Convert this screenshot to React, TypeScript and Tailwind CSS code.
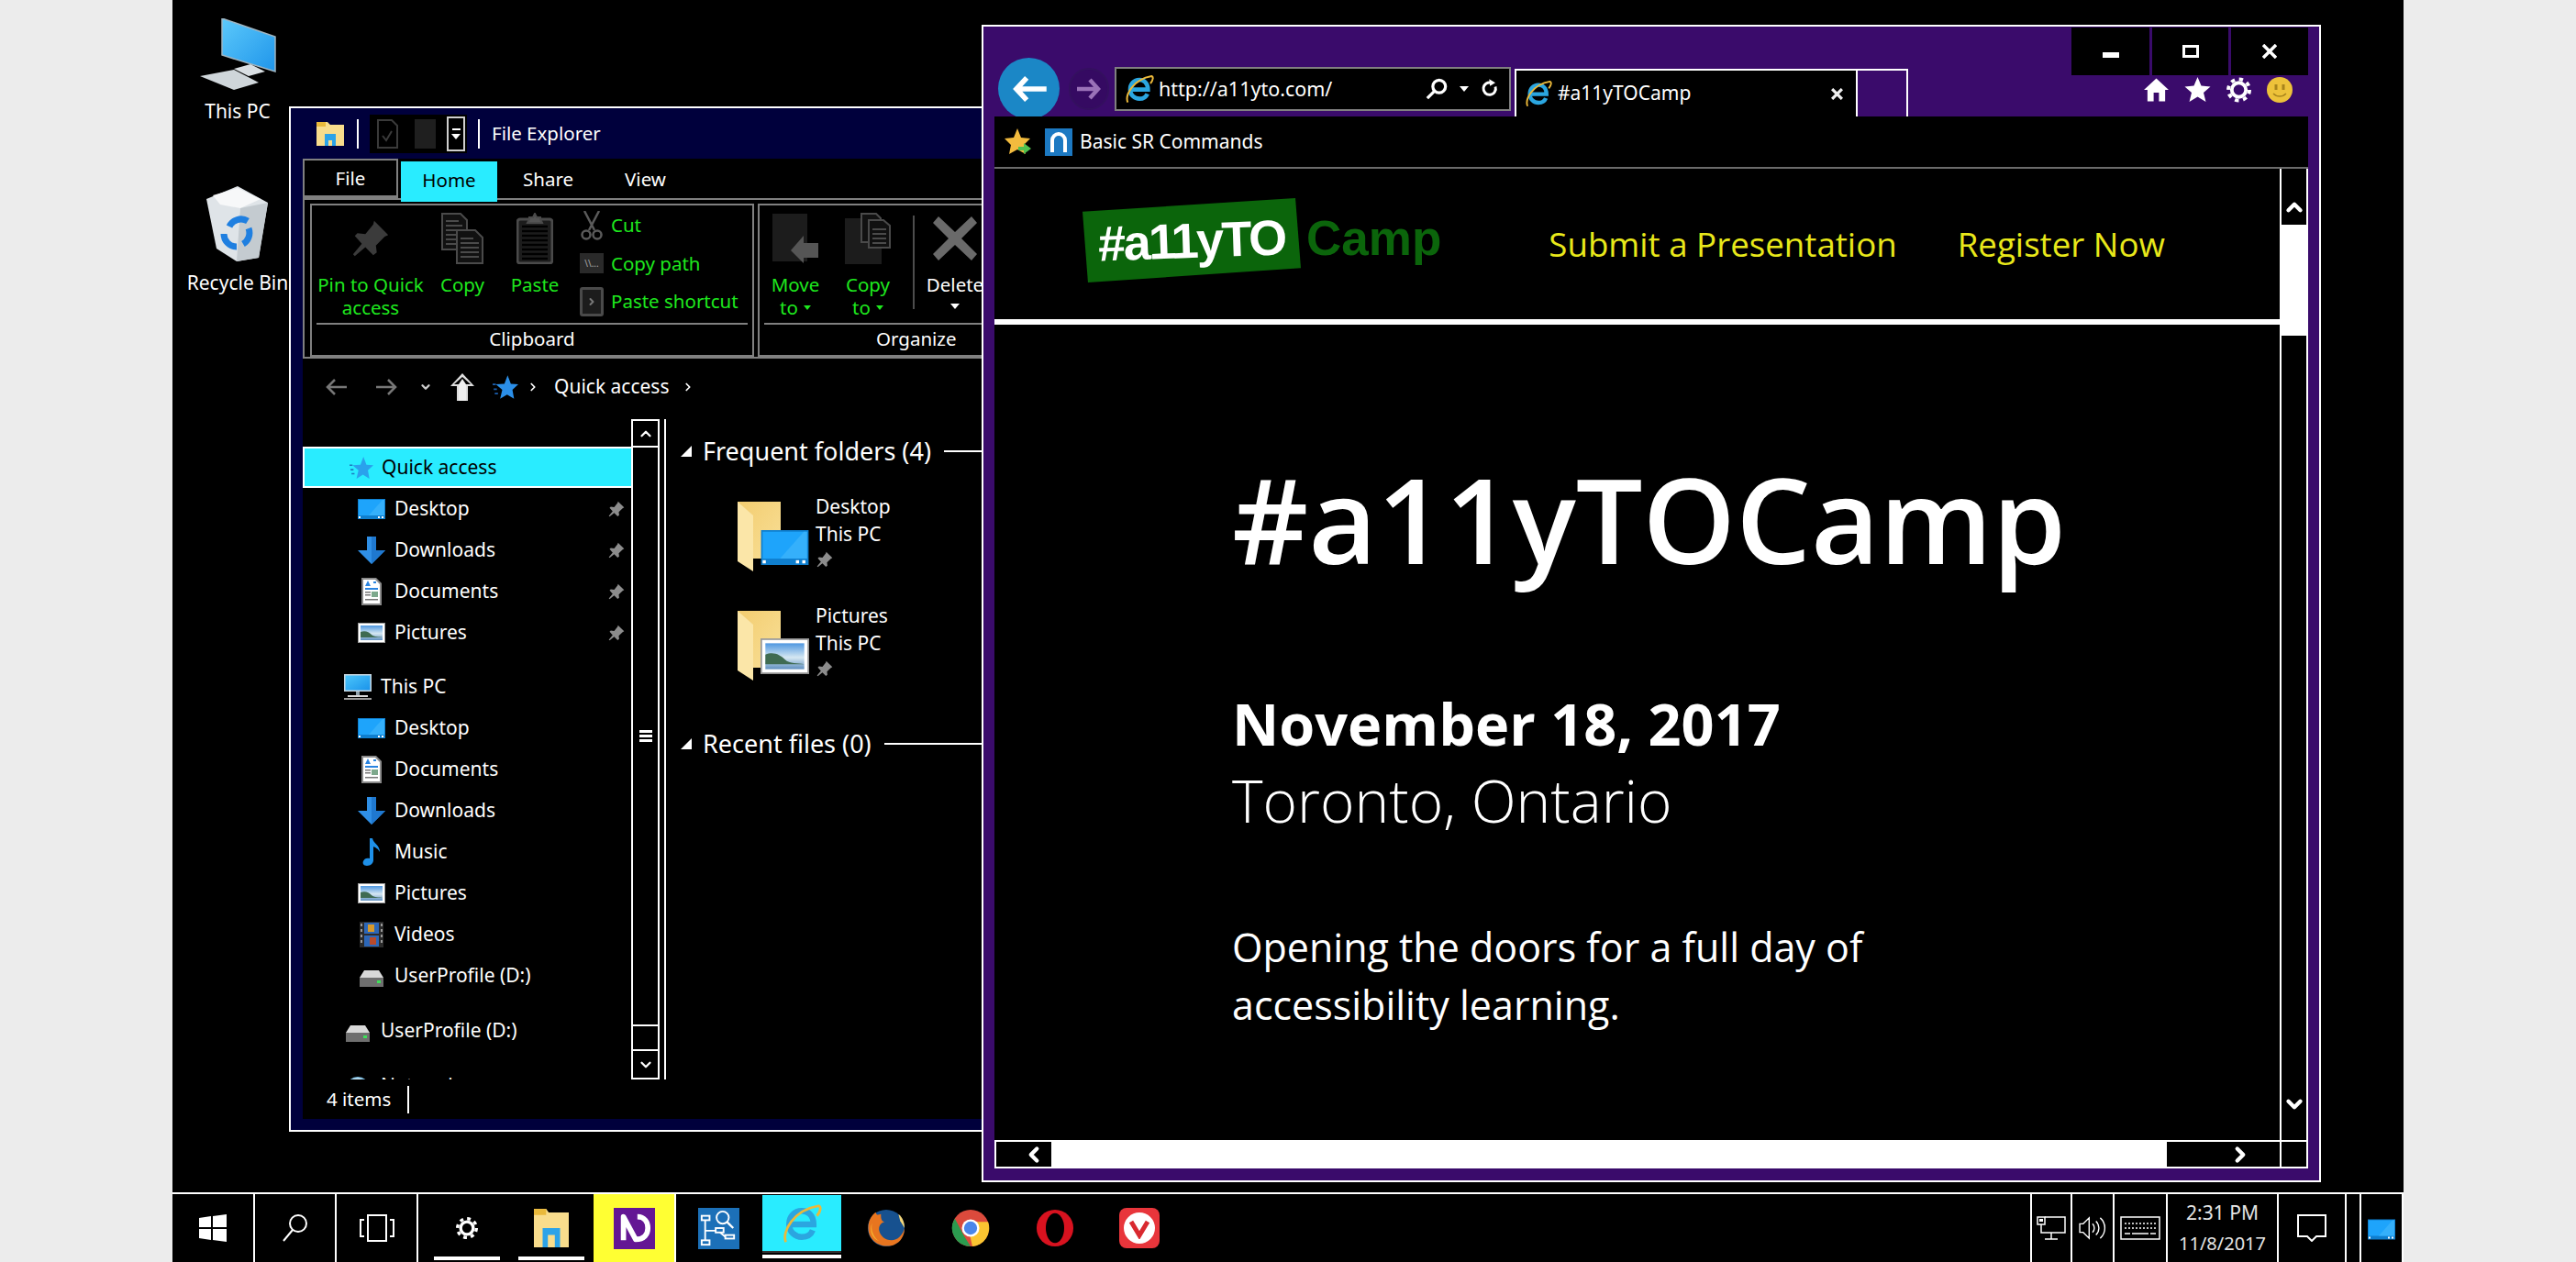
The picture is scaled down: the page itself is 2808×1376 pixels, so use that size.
import { ChevronDown, ChevronLeft, ChevronRight, ChevronUp } from "lucide-react";
import React from "react";

const cyan = "bg-[#29ecff]";

const Pin = ({ className = "", fill = "#8c8c8c" }: { className?: string; fill?: string }) => (
  <svg viewBox="0 0 24 24" className={className} fill={fill}>
    <path d="M14 2l8 8-2 1-5 5 .5 4-2 1.5L9 17l-6 5-1-1 5-6-4-4.500L4.500 9 9 9.500 13.500 4z" />
  </svg>
);

const DesktopIcon = ({ className = "w-[30px] h-[22px]" }: { className?: string }) => (
  <svg viewBox="0 0 30 22" className={className}>
    <rect width="30" height="22" fill="#0f7fcf" />
    <rect x="1" y="1" width="28" height="17" fill="#1ea4fb" />
    <polygon points="12,18 27,1 29,1 29,18" fill="#35b0fb" />
    <rect x="1" y="19" width="2" height="2" fill="#fff" />
    <rect x="22" y="19" width="2" height="2" fill="#fff" />
    <rect x="26" y="19" width="2" height="2" fill="#fff" />
  </svg>
);

const DownloadIcon = () => (
  <svg viewBox="0 0 30 30" className="w-[30px] h-[30px]">
    <path d="M10 0h10v15h10L15 30 0 15h10z" fill="#2f8fe6" />
    <path d="M15 0h5v15h10L15 30z" fill="#1f78cf" />
  </svg>
);

const DocumentIcon = () => (
  <svg viewBox="0 0 24 30" className="w-[24px] h-[30px]">
    <path d="M1 0h16l6 6v24H1z" fill="#8a8a8a" />
    <path d="M3 2h13l5 5v21H3z" fill="#fff" />
    <path d="M8 3l3 6H5zM14 4h3v2h-3zM5 11h14v2H5z" fill="#2a84e0" />
    <rect x="5" y="15" width="6" height="1.500" fill="#777" />
    <rect x="5" y="18" width="6" height="1.500" fill="#777" />
    <rect x="12" y="15" width="7" height="6" fill="#7da88c" />
    <rect x="5" y="23" width="14" height="1.500" fill="#777" />
  </svg>
);

const PictureIcon = ({ className = "w-[30px] h-[22px]" }: { className?: string }) => (
  <svg viewBox="0 0 30 22" className={className}>
    <defs>
      <linearGradient id="pic-sky" x1="0" y1="0" x2="0" y2="1">
        <stop offset="0" stopColor="#4f97e0" />
        <stop offset="0.55" stopColor="#d6e8f2" />
        <stop offset="1" stopColor="#5f8fc0" />
      </linearGradient>
    </defs>
    <rect width="30" height="22" fill="#9a9a9a" />
    <rect x="1" y="1" width="28" height="20" fill="#fff" />
    <rect x="3" y="3" width="24" height="16" fill="url(#pic-sky)" />
    <path d="M3 10c5-2 9 0 12 3s8 2 12 3v0H3z" fill="#3f6b52" />
  </svg>
);

const MusicIcon = () => (
  <svg viewBox="0 0 24 30" className="w-[24px] h-[30px]">
    <path d="M10 0h3c1 6 8 7 8 15-2-4-5-5-7-6v15c0 3-3 6-7 6-4 0-5-3-4-5 1-3 4-4 7-3z" fill="#1e90e8" />
  </svg>
);

const VideoIcon = () => (
  <svg viewBox="0 0 26 28" className="w-[26px] h-[28px]">
    <rect width="26" height="28" fill="#2b2b2b" />
    <rect x="5" y="1" width="16" height="12" fill="#2c67b8" />
    <rect x="5" y="15" width="16" height="12" fill="#2c67b8" />
    <rect x="9" y="3" width="7" height="8" fill="#d79a2b" />
    <rect x="11" y="17" width="7" height="8" fill="#b84a2b" />
    <path d="M1 2h2v3H1zM1 8h2v3H1zM1 14h2v3H1zM1 20h2v3H1zM23 2h2v3h-2zM23 8h2v3h-2zM23 14h2v3h-2zM23 20h2v3h-2z" fill="#999" />
  </svg>
);

const DriveIcon = () => (
  <svg viewBox="0 0 26 18" className="w-[26px] h-[18px] mt-[6px]">
    <path d="M5 0h16l5 8H0z" fill="#d9d9d9" />
    <rect y="8" width="26" height="10" fill="#6f6f6f" />
    <rect x="19" y="11" width="4" height="3" fill="#3fe05a" />
  </svg>
);

const MonitorIcon = () => (
  <svg viewBox="0 0 30 28" className="w-[30px] h-[28px]">
    <defs>
      <linearGradient id="pc-screen" x1="0" y1="0" x2="1" y2="1">
        <stop offset="0" stopColor="#4cc6fb" />
        <stop offset="1" stopColor="#1a93ea" />
      </linearGradient>
    </defs>
    <rect x="0" y="0" width="30" height="19" fill="#c9d8e2" />
    <rect x="1.500" y="1.500" width="27" height="16" fill="url(#pc-screen)" />
    <rect x="13" y="19" width="4" height="4" fill="#8fa0aa" />
    <rect x="4" y="23" width="22" height="2" fill="#d9d9d9" />
    <rect x="0" y="26" width="30" height="2" fill="#9a9a9a" />
  </svg>
);

const GlobeIcon = () => (
  <svg viewBox="0 0 28 28" className="w-[28px] h-[28px] mt-[6px]">
    <circle cx="14" cy="14" r="13" fill="#7dbde2" />
    <path d="M8 4c4-2 9-2 12 1l-3 4-6-1z" fill="#c4e2f1" />
  </svg>
);

const StarIcon = ({ className = "" }: { className?: string }) => (
  <svg viewBox="0 0 24 24" className={className}>
    <path d="M14 1l3 8 7 .5-5.500 5L20 23l-6.500-4L7 23l2-8.500L3 9.500 11 9z" fill="#2b8fe8" />
    <path d="M3 9.500h-3M4 14H1M5 18H2" stroke="#1b5fb0" strokeWidth="1.500" />
  </svg>
);

const FolderTile = ({ thumb }: { thumb: React.ReactNode }) => (
  <div className="relative w-[74px] h-[76px] shrink-0">
    <svg viewBox="0 0 48 76" className="w-[48px] h-[76px]">
      <defs>
        <linearGradient id="folder-back" x1="0" y1="0" x2="1" y2="1">
          <stop offset="0" stopColor="#f3cd70" />
          <stop offset="1" stopColor="#f8df97" />
        </linearGradient>
      </defs>
      <polygon points="0,0 47,0 47,62 17,62 0,30" fill="url(#folder-back)" />
      <polygon points="0,0 17,15 17,76 0,65" fill="#fbe6a8" />
    </svg>
    <div className="absolute right-[-4px] bottom-[7px]">{thumb}</div>
  </div>
);

// ribbon glyphs, all dimmed since nothing is selected
const RibbonPin = () => <Pin className="w-[46px] h-[46px]" fill="#3b3b3b" />;

const RibbonCopy = () => (
  <svg viewBox="0 0 46 56" className="w-[46px] h-[56px]" fill="none" stroke="#4a4a4a" strokeWidth="2">
    <path d="M1 1h20l7 7v32H1z" fill="#111" />
    <path d="M5 9h14M5 14h18M5 19h18M5 24h18M5 29h18M5 34h18" />
    <path d="M17 19h20l8 8v28H17z" fill="#111" />
    <path d="M21 28h14M21 33h20M21 38h20M21 43h20M21 48h20" />
  </svg>
);

const RibbonPaste = () => (
  <svg viewBox="0 0 40 56" className="w-[40px] h-[56px]" fill="none" stroke="#4a4a4a" strokeWidth="2">
    <rect x="1" y="7" width="38" height="48" rx="3" fill="#1c1c1c" strokeWidth="3" />
    <path d="M14 7V5h4l2-4 2 4h4v2l2 4H12z" fill="#555" />
    <path d="M6 15h28M6 20h28M6 25h28M6 30h28M6 35h28M6 40h28M6 45h28M6 50h28" stroke="#000" strokeWidth="2.500" />
  </svg>
);

const Scissors = () => (
  <svg viewBox="0 0 24 32" className="w-[24px] h-[32px]" fill="none" stroke="#5a5a5a" strokeWidth="2.500">
    <path d="M4 0l11 21M20 0L9 21" />
    <circle cx="6" cy="26" r="4.500" />
    <circle cx="18" cy="26" r="4.500" />
  </svg>
);

const MoveTo = () => (
  <svg viewBox="0 0 50 54" className="w-[50px] h-[54px]">
    <rect x="0" y="0" width="38" height="52" fill="#1c1c1c" />
    <path d="M20 40l14-16v8h16v16H34v6z" fill="#555" />
  </svg>
);

const CopyTo = () => (
  <svg viewBox="0 0 50 56" className="w-[50px] h-[56px]">
    <rect x="0" y="6" width="40" height="50" fill="#1c1c1c" />
    <g fill="#111" stroke="#4a4a4a" strokeWidth="2">
      <path d="M18 1h16l5 5v26H18z" />
      <path d="M26 8h16l7 6v24H26z" />
    </g>
    <path d="M30 18h15M30 23h15M30 28h15M30 33h15" stroke="#4a4a4a" strokeWidth="2" />
  </svg>
);

const DeleteX = () => (
  <svg viewBox="0 0 48 48" className="w-[48px] h-[48px]">
    <path d="M6 0l18 17L42 0l6 7-17 17 17 17-6 7-18-17L6 48l-6-7 17-17L0 7z" fill="#6a6a6a" />
  </svg>
);

const RibbonColumn = ({ icon, label, second, width, arrow }: { icon: React.ReactNode; label: string; second?: string; width: string; arrow?: boolean }) => (
  <div className={`${width} flex flex-col items-center pt-[8px] text-[#1ee81e]`}>
    <div className="h-[56px] flex items-center justify-center">{icon}</div>
    <div className="mt-[10px] leading-[25px] text-center whitespace-nowrap">
      <div>{label}</div>
      {second && (
        <div className="flex items-center justify-center">
          {second}
          {arrow && <span className="ml-[6px] border-x-[4px] border-t-[5px] border-x-transparent border-t-[#1ee81e]" />}
        </div>
      )}
    </div>
  </div>
);

const NavRow = ({ icon, label, pinned, top }: { icon: React.ReactNode; label: string; pinned?: boolean; top?: boolean }) => (
  <div className={`h-[45px] shrink-0 flex items-center ${top ? "pl-[45px]" : "pl-[60px]"}`}>
    <div className="w-[30px] h-[30px] flex items-center justify-center shrink-0">{icon}</div>
    <span className="ml-[10px] flex-1 whitespace-nowrap">{label}</span>
    {pinned && <Pin className="w-[20px] h-[20px] mr-[6px]" />}
  </div>
);

const SectionHead = ({ label }: { label: string }) => (
  <div className="flex items-center h-[30px]">
    <svg viewBox="0 0 12 12" className="w-[12px] h-[12px] ml-[16px] mr-[12px] shrink-0" fill="#fff"><path d="M12 0v12H0z" /></svg>
    <span className="text-[27px] whitespace-nowrap">{label}</span>
    <span className="flex-1 h-[2px] bg-white ml-[14px]" />
  </div>
);

const FolderItem = ({ thumb, name }: { thumb: React.ReactNode; name: string }) => (
  <div className="flex">
    <FolderTile thumb={thumb} />
    <div className="ml-[11px] mt-[-10px] leading-[30px] text-[21px]">
      <div>{name}</div>
      <div>This PC</div>
      <Pin className="w-[20px] h-[20px] mt-[3px]" />
    </div>
  </div>
);

const Explorer = () => (
  <div className="absolute left-[127px] top-[116px] w-[790px] h-[1118px] border-2 border-white bg-[#00003c] flex flex-col overflow-hidden font-['Noto_Sans',sans-serif] text-white text-[20.500px]">
    <div className="h-[55px] shrink-0 flex items-center pl-[28px]">
      <svg viewBox="0 0 30 26" className="w-[30px] h-[26px]">
        <path d="M0 3V0h12l3 3h15v23H0z" fill="#f9dd8c" />
        <rect y="0" width="10" height="5" fill="#e9b93b" />
        <path d="M9 13h12v13h-4v-6h-4v6H9z" fill="#2ca3e8" />
      </svg>
      <span className="w-[2px] h-[32px] bg-white ml-[14px]" />
      <div className="ml-[12px] h-[42px] w-[106px] bg-black flex items-center pl-[8px] gap-[19px]">
        <svg viewBox="0 0 23 32" className="w-[23px] h-[32px]" fill="none" stroke="#3a3a3a" strokeWidth="2">
          <path d="M1 1h15l6 6v24H1z" />
          <path d="M6 18l4 5 6-10" />
        </svg>
        <div className="w-[23px] h-[32px] bg-[#1f1f1f] -ml-[1px]" />
        <div className="w-[20px] h-[38px] border-2 border-[#cfcfcf] flex flex-col items-center justify-center gap-[4px] -ml-[7px]">
          <span className="w-[9px] h-[2px] bg-white" />
          <span className="border-x-[5px] border-t-[6px] border-x-transparent border-t-white" />
        </div>
      </div>
      <span className="w-[2px] h-[32px] bg-white ml-[12px]" />
      <span className="ml-[13px] whitespace-nowrap">File Explorer</span>
    </div>
    <div className="ml-[13px] mb-[12px] flex-1 min-h-0 bg-black flex flex-col">
      <div className="h-[45px] shrink-0 flex border-b-2 border-[#808080]">
        <div className="w-[104px] border-2 border-[#808080] border-b-[3px] flex items-center justify-center pt-[1px]">File</div>
        <div className={`ml-[3px] mt-[3px] w-[105px] h-[44px] flex items-center justify-center pb-[4px] text-black ${cyan}`}>Home</div>
        <div className="ml-[28px] flex items-center pt-[1px]">Share</div>
        <div className="ml-[56px] flex items-center pt-[1px]">View</div>
      </div>
      <div className="h-[173px] shrink-0 flex border-l-2 border-b-[2px] border-[#808080] pl-[6px] pt-[4px] gap-[4px]">
        <div className="w-[484px] border-2 border-[#808080] flex flex-col">
          <div className="h-[133px] flex pl-[4px]">
            <RibbonColumn width="w-[120px]" icon={<RibbonPin />} label="Pin to Quick" second="access" />
            <RibbonColumn width="w-[80px]" icon={<RibbonCopy />} label="Copy" />
            <RibbonColumn width="w-[78px]" icon={<RibbonPaste />} label="Paste" />
            <div className="ml-[10px] pt-[1px] text-[#1ee81e]">
              <div className="h-[41px] flex items-center gap-[8px]">
                <div className="w-[26px] flex justify-center"><Scissors /></div>
                <span>Cut</span>
              </div>
              <div className="h-[42px] flex items-center gap-[8px]">
                <div className="w-[26px] h-[22px] bg-[#2a2a2a] flex items-center justify-center text-[10px] text-[#aaa] leading-none">\\...</div>
                <span className="whitespace-nowrap">Copy path</span>
              </div>
              <div className="h-[41px] flex items-center gap-[8px]">
                <div className="w-[26px] h-[32px] border-[3px] border-[#4a4a4a] rounded-[3px] bg-[#1c1c1c] flex items-center justify-center">
                  <ChevronRight className="w-[12px] h-[12px] text-[#777]" strokeWidth={4} />
                </div>
                <span className="whitespace-nowrap">Paste shortcut</span>
              </div>
            </div>
          </div>
          <div className="h-[2px] bg-[#808080] mx-[5px]" />
          <div className="flex-1 flex items-center justify-center pb-[2px]">Clipboard</div>
        </div>
        <div className="flex-1 border-2 border-r-0 border-[#808080] flex flex-col">
          <div className="h-[133px] flex">
            <RibbonColumn width="w-[78px]" icon={<MoveTo />} label="Move" second="to" arrow />
            <RibbonColumn width="w-[80px]" icon={<CopyTo />} label="Copy" second="to" arrow />
            <div className="w-[2px] h-[102px] bg-[#4d4d4d] mt-[11px] ml-[9px]" />
            <div className="w-[88px] flex flex-col items-center pt-[8px]">
              <div className="h-[56px] flex items-center justify-center"><DeleteX /></div>
              <div className="mt-[10px] leading-[25px]">Delete</div>
              <span className="mt-[8px] border-x-[5px] border-t-[6px] border-x-transparent border-t-white" />
            </div>
          </div>
          <div className="h-[2px] bg-[#808080] mx-[5px]" />
          <div className="flex-1 flex items-center pl-[127px] pb-[2px]">Organize</div>
        </div>
      </div>
      <div className="h-[66px] shrink-0 flex items-center pb-[4px] text-[21px]">
        <svg viewBox="0 0 24 20" className="w-[24px] h-[20px] ml-[24px]" fill="none" stroke="#777" strokeWidth="2.500"><path d="M11 2L3 10l8 8M3 10h21" /></svg>
        <svg viewBox="0 0 24 20" className="w-[24px] h-[20px] ml-[32px]" fill="none" stroke="#777" strokeWidth="2.500"><path d="M13 2l8 8-8 8M21 10H0" /></svg>
        <ChevronDown className="w-[14px] h-[14px] ml-[23px] text-[#ccc]" strokeWidth={4} />
        <svg viewBox="0 0 26 30" className="w-[26px] h-[30px] ml-[20px]" fill="#ddd"><path d="M13 0l13 14h-7v16h-2V12h5L13 4 4 12h5v18H7V14H0z" /><path d="M9 12l4-6 4 6v18H9z" fill="#eee" /></svg>
        <StarIcon className="w-[28px] h-[28px] ml-[20px]" />
        <ChevronRight className="w-[14px] h-[14px] ml-[9px]" strokeWidth={3} />
        <span className="ml-[16px] whitespace-nowrap">Quick access</span>
        <ChevronRight className="w-[14px] h-[14px] ml-[14px]" strokeWidth={3} />
      </div>
      <div className="h-[720px] shrink-0 flex">
        <div className="w-[358px] shrink-0 flex flex-col pt-[30px] overflow-hidden text-[21px]">
          <div className={`h-[45px] shrink-0 flex items-center pl-[49px] border-2 border-white border-r-0 text-black ${cyan}`}>
            <StarIcon className="w-[26px] h-[26px] mr-[9px] opacity-80" />
            <span>Quick access</span>
          </div>
          <NavRow icon={<DesktopIcon />} label="Desktop" pinned />
          <NavRow icon={<DownloadIcon />} label="Downloads" pinned />
          <NavRow icon={<DocumentIcon />} label="Documents" pinned />
          <NavRow icon={<PictureIcon />} label="Pictures" pinned />
          <div className="h-[14px] shrink-0" />
          <NavRow top icon={<MonitorIcon />} label="This PC" />
          <NavRow icon={<DesktopIcon />} label="Desktop" />
          <NavRow icon={<DocumentIcon />} label="Documents" />
          <NavRow icon={<DownloadIcon />} label="Downloads" />
          <NavRow icon={<MusicIcon />} label="Music" />
          <NavRow icon={<PictureIcon />} label="Pictures" />
          <NavRow icon={<VideoIcon />} label="Videos" />
          <NavRow icon={<DriveIcon />} label="UserProfile (D:)" />
          <div className="h-[15px] shrink-0" />
          <NavRow top icon={<DriveIcon />} label="UserProfile (D:)" />
          <div className="h-[15px] shrink-0" />
          <NavRow top icon={<GlobeIcon />} label="Network" />
        </div>
        <div className="w-[31px] shrink-0 border-2 border-white flex flex-col">
          <div className="h-[29px] border-b-2 border-white flex items-center justify-center"><ChevronUp className="w-[18px] h-[18px]" strokeWidth={3} /></div>
          <div className="flex-1 flex flex-col items-center justify-center gap-[2px] border-b-2 border-white">
            <span className="w-[14px] h-[3px] bg-white" />
            <span className="w-[14px] h-[3px] bg-white" />
            <span className="w-[14px] h-[3px] bg-white" />
          </div>
          <div className="h-[27px] border-b-2 border-white" />
          <div className="h-[29px] flex items-center justify-center"><ChevronDown className="w-[18px] h-[18px]" strokeWidth={3} /></div>
        </div>
        <div className="w-[2px] shrink-0 bg-white ml-[5px]" />
        <div className="flex-1 pt-[20px]">
          <SectionHead label="Frequent folders (4)" />
          <div className="ml-[78px] mt-[40px] flex flex-col gap-[43px]">
            <FolderItem name="Desktop" thumb={<DesktopIcon className="w-[53px] h-[38px]" />} />
            <FolderItem name="Pictures" thumb={<PictureIcon className="w-[53px] h-[39px]" />} />
          </div>
          <div className="mt-[54px]"><SectionHead label="Recent files (0)" /></div>
        </div>
      </div>
      <div className="flex-1 flex items-center pl-[26px]">
        <span>4 items</span>
        <span className="w-[2px] h-[30px] bg-white ml-[18px]" />
      </div>
    </div>
  </div>
);

const IeLogo = ({ className = "" }: { className?: string }) => (
  <svg viewBox="0 0 48 48" className={className} fill="none">
    <path d="M12 25H38C38 14 31 9 24 9c-9 0-15 7-15 16s7 15 15 15c6 0 11-3 13-8" stroke="#2ba6e0" strokeWidth="7" />
    <path d="M5 46C0 34 14 8 44 3c3 1 3 6-2 12" stroke="#ecb93a" strokeWidth="3" />
  </svg>
);

const Browser = () => (
  <div className="absolute left-[882px] top-[27px] w-[1460px] h-[1262px] border-2 border-white bg-[#3a0b6b] flex flex-col px-[12px] pb-[13px] font-['Noto_Sans',sans-serif] text-white">
    <div className="h-[98px] shrink-0 flex overflow-hidden">
      <div className="mt-[34px] ml-[4px] w-[67px] h-[67px] rounded-full bg-[#1b87c6] shrink-0 flex items-center justify-center">
        <svg viewBox="0 0 40 32" className="w-[38px] h-[30px]" fill="none" stroke="#fff" strokeWidth="6"><path d="M17 3L5 16l12 13M6 16h34" /></svg>
      </div>
      <div className="mt-[45px] ml-[10px] w-[44px] h-[46px] rounded-full border-2 border-[#34105f] bg-[#350a62] shrink-0 flex items-center justify-center">
        <svg viewBox="0 0 26 24" className="w-[26px] h-[24px]" fill="none" stroke="#9a72b8" strokeWidth="4.500"><path d="M14 2l9 10-9 10M23 12H0" /></svg>
      </div>
      <div className="mt-[44px] ml-[6px] w-[432px] h-[48px] border-2 border-[#808080] bg-black shrink-0 flex items-center pl-[9px] pr-[12px]">
        <IeLogo className="w-[32px] h-[34px]" />
        <span className="ml-[5px] flex-1 text-[21.500px] whitespace-nowrap">http://a11yto.com/</span>
        <svg viewBox="0 0 26 26" className="w-[24px] h-[26px] mr-[5px]" fill="none" stroke="#fff" strokeWidth="3.500"><circle cx="16" cy="10" r="7.500" /><path d="M11 15l-9 9" /></svg>
        <span className="ml-[8px] border-x-[5px] border-t-[6px] border-x-transparent border-t-white" />
        <svg viewBox="0 0 24 26" className="w-[20px] h-[24px] ml-[14px] mr-[-2px]" fill="none" stroke="#fff" strokeWidth="3.500"><path d="M18 10a8 8 0 1 1-5-5" /><path d="M10 0l8 5-7 4z" fill="#fff" stroke="none" /></svg>
      </div>
      <div className="mt-[46px] ml-[4px] w-[374px] h-[52px] border-2 border-b-0 border-white bg-black shrink-0 flex items-center pl-[9px] pr-[14px]">
        <IeLogo className="w-[30px] h-[32px]" />
        <span className="ml-[6px] flex-1 text-[21px] whitespace-nowrap">#a11yTOCamp</span>
        <svg viewBox="0 0 12 12" className="w-[13px] h-[13px]" stroke="#eee" strokeWidth="3"><path d="M1 1l10 10M11 1L1 11" /></svg>
      </div>
      <div className="mt-[46px] w-[55px] h-[52px] border-2 border-l-0 border-b-0 border-white shrink-0" />
      <div className="flex-1 flex flex-col items-end pt-[1px]">
        <div className="flex gap-[3px]">
          <div className="w-[85px] h-[52px] bg-black flex items-center justify-center"><span className="w-[18px] h-[6px] bg-white mt-[8px]" /></div>
          <div className="w-[83px] h-[52px] bg-black flex items-center justify-center"><span className="w-[18px] h-[14px] border-[3px] border-white" /></div>
          <div className="w-[84px] h-[52px] bg-black flex items-center justify-center">
            <svg viewBox="0 0 16 16" className="w-[16px] h-[16px]" stroke="#fff" strokeWidth="3.500"><path d="M1 1l14 14M15 1L1 15" /></svg>
          </div>
        </div>
        <div className="flex items-center gap-[17px] mr-[17px] mt-[2px]">
          <svg viewBox="0 0 28 28" className="w-[27px] h-[28px]" fill="#fff"><path d="M14 1l14 13h-4v13h-7V17h-6v10H4V14H0z" /></svg>
          <svg viewBox="0 0 28 28" className="w-[29px] h-[28px]" fill="#fff"><path d="M14 0l4 9.500 10 1-7.500 6.500 2.500 10-9-5.500L5 27l2.500-10L0 10.500l10-1z" /></svg>
          <svg viewBox="0 0 28 28" className="w-[27px] h-[28px]" fill="none" stroke="#fff"><circle cx="14" cy="14" r="8" strokeWidth="4" /><circle cx="14" cy="14" r="12" strokeWidth="4" strokeDasharray="4.500 4.900" /></svg>
          <svg viewBox="0 0 28 28" className="w-[28px] h-[28px]"><circle cx="14" cy="14" r="14" fill="#edc23a" /><rect x="8.500" y="8" width="3" height="6" fill="#a8841c" /><rect x="16.500" y="8" width="3" height="6" fill="#a8841c" /><path d="M7 18c4 4 10 4 14 0" stroke="#a8841c" strokeWidth="1.500" fill="none" /></svg>
        </div>
      </div>
    </div>
    <div className="h-[57px] shrink-0 bg-black border-b-2 border-[#6b6b6b] flex items-center pl-[10px] text-[21px]">
      <svg viewBox="0 0 30 30" className="w-[30px] h-[30px]">
        <path d="M15 0l4 10 10 1-7 7 2 10-9-5-9 5 2-10-7-7 10-1z" fill="#f2bb3e" />
        <path d="M16 20h6v-4l8 6-8 6v-4h-6z" fill="#4fc04f" />
      </svg>
      <div className="ml-[15px] w-[30px] h-[30px] bg-[#1c79c2] flex items-center justify-center">
        <svg viewBox="0 0 22 26" className="w-[22px] h-[26px]" fill="none" stroke="#fff" strokeWidth="4"><path d="M4 24V11a7 7 0 0 1 14 0v13" /></svg>
      </div>
      <span className="ml-[8px] whitespace-nowrap">Basic SR Commands</span>
    </div>
    <div className="flex-1 min-h-0 bg-black flex flex-col">
      <div className="flex-1 min-h-0 flex">
        <div className="flex-1 min-w-0 flex flex-col font-['Open_Sans',sans-serif]">
          <div className="h-[170px] shrink-0 border-b-[6px] border-white flex items-center pl-[96px]">
            <div className="w-[238px] h-[92px] mt-[-8px] bg-[#0b650b] [clip-path:polygon(0_16%,97.500%_0,100%_83%,2.500%_100%)] flex items-center justify-center">
              <span className="font-['Liberation_Sans',sans-serif] font-bold text-[54px] tracking-[-2.500px] -rotate-2 whitespace-nowrap">#a11yTO</span>
            </div>
            <span className="ml-[6px] mt-[-12px] font-['Liberation_Sans',sans-serif] font-bold text-[#0b650b] text-[53px]">Camp</span>
            <span className="ml-[117px] pt-[2px] text-[#e8e81a] text-[36.700px] whitespace-nowrap">Submit a Presentation</span>
            <span className="ml-[66px] pt-[2px] text-[#e8e81a] text-[36.700px] whitespace-nowrap">Register Now</span>
          </div>
          <div className="pl-[259px] pt-[136px]">
            <h1 className="text-[129px] leading-[150px] font-semibold whitespace-nowrap">#a11yTOCamp</h1>
            <p className="mt-[109px] text-[63px] leading-[80px] font-bold whitespace-nowrap">November 18, 2017</p>
            <p className="mt-[4px] text-[64px] leading-[80px] font-light whitespace-nowrap">Toronto, Ontario</p>
            <p className="mt-[88px] text-[43px] leading-[63px] whitespace-nowrap">Opening the doors for a full day of<br />accessibility learning.</p>
          </div>
        </div>
        <div className="w-[31px] shrink-0 border-x-2 border-white flex flex-col">
          <div className="h-[61px] shrink-0 bg-black flex items-end justify-center pb-[6px]"><ChevronUp className="w-[26px] h-[26px]" strokeWidth={4} /></div>
          <div className="h-[121px] shrink-0 bg-white" />
          <div className="flex-1 flex items-end justify-center pb-[26px]"><ChevronDown className="w-[26px] h-[26px]" strokeWidth={4} /></div>
        </div>
      </div>
      <div className="h-[31px] shrink-0 flex bg-white p-[2px] pl-[2px]">
        <div className="w-[60px] bg-black flex items-center justify-end pr-[6px]"><ChevronLeft className="w-[26px] h-[26px]" strokeWidth={4} /></div>
        <div className="flex-1" />
        <div className="w-[123px] bg-black flex items-center justify-end pr-[30px]"><ChevronRight className="w-[26px] h-[26px]" strokeWidth={4} /></div>
        <div className="w-[2px]" />
        <div className="w-[27px] bg-black" />
      </div>
    </div>
  </div>
);

const DesktopShortcuts = () => (
  <div className="w-[128px] ml-[7px] flex flex-col items-center pt-[20px] text-white font-['Noto_Sans',sans-serif] text-[21px] overflow-hidden">
    <svg viewBox="0 0 84 82" className="w-[84px] h-[82px]">
      <defs>
        <linearGradient id="desk-pc" x1="0" y1="0" x2="1" y2="1">
          <stop offset="0" stopColor="#5cc9fb" />
          <stop offset="1" stopColor="#1f95ea" />
        </linearGradient>
      </defs>
      <polygon points="25,0 83,20 83,58 25,40" fill="url(#desk-pc)" stroke="#9fb4c0" strokeWidth="1.500" />
      <polygon points="38,55 56,50 72,58 54,63" fill="#d9dfe3" />
      <polygon points="1,63 38,56 65,70 38,78" fill="#cfd6da" />
    </svg>
    <span className="mt-[7px] leading-[24px]">This PC</span>
    <svg viewBox="0 0 74 82" className="w-[74px] h-[82px] mt-[70px]">
      <polygon points="3,14 37,0 70,18 60,78 36,82 14,68" fill="#dfe4e8" />
      <polygon points="10,10 37,2 62,14 40,24 18,20" fill="#f7f8f9" />
      <polygon points="40,24 70,18 60,78 36,82" fill="#c4cbd0" />
      <path d="M28 44a14 14 0 0 1 20-6M49 46a14 14 0 0 1-6 17M36 66a14 14 0 0 1-14-14" fill="none" stroke="#1f7fe0" strokeWidth="7" />
    </svg>
    <span className="mt-[9px] leading-[28px] whitespace-nowrap">Recycle Bin</span>
  </div>
);

const TaskTile = ({ children, underline }: { children: React.ReactNode; underline?: boolean }) => (
  <div className="w-[92px] h-full relative flex items-center justify-center">
    {children}
    {underline && <span className="absolute left-[10px] right-[10px] bottom-[2px] h-[4px] bg-white" />}
  </div>
);

const TrayCell = ({ width, children }: { width: string; children: React.ReactNode }) => (
  <div className={`${width} shrink-0 border-l-2 border-white flex flex-col items-center justify-center`}>{children}</div>
);

const Taskbar = () => (
  <div className="h-[76px] shrink-0 border-t-2 border-white flex font-['Noto_Sans',sans-serif] text-white">
    <div className="w-[90px] flex items-center justify-center border-r-2 border-white">
      <svg viewBox="0 0 30 30" className="w-[30px] h-[30px]" fill="#fff"><path d="M0 4l13-2v12H0zM15 2l15-2v14H15zM0 16h13v12L0 26zM15 16h15v14l-15-2z" /></svg>
    </div>
    <div className="w-[88px] ml-[1px] flex items-center justify-center border-r-2 border-white">
      <svg viewBox="0 0 30 32" className="w-[30px] h-[32px]" fill="none" stroke="#fff" strokeWidth="2"><circle cx="18" cy="11" r="9" /><path d="M12 18L2 30" /></svg>
    </div>
    <div className="w-[88px] ml-[1px] flex items-center justify-center border-r-2 border-white">
      <svg viewBox="0 0 38 30" className="w-[38px] h-[30px]" fill="none" stroke="#fff" strokeWidth="2"><rect x="9" y="1" width="20" height="28" /><path d="M5 6H1v18h4M33 6h4v18h-4" /></svg>
    </div>
    <div className="w-[7px]" />
    <TaskTile underline>
      <svg viewBox="0 0 28 28" className="w-[24px] h-[26px]" fill="none" stroke="#fff"><circle cx="14" cy="14" r="8" strokeWidth="4" /><circle cx="14" cy="14" r="12" strokeWidth="4" strokeDasharray="4.500 4.900" /></svg>
    </TaskTile>
    <TaskTile underline>
      <svg viewBox="0 0 40 44" className="w-[38px] h-[44px]">
        <path d="M0 4V0h14l3 4h23v40H0z" fill="#f9dd8c" />
        <rect width="14" height="7" fill="#e9b93b" />
        <path d="M10 22h20v22h-6V30h-8v14h-6z" fill="#2ca3e8" />
      </svg>
    </TaskTile>
    <div className="w-[90px] h-full bg-[#ffff33] flex items-center justify-center border-r-2 border-white">
      <div className="w-[45px] h-[45px] bg-[#641694] flex items-center justify-center">
        <svg viewBox="0 0 40 40" className="w-[38px] h-[38px]" fill="none" stroke="#fff" strokeWidth="6" strokeLinejoin="round"><path d="M8 34V7l14 26c10 0 14-6 14-13S32 7 24 7" /></svg>
      </div>
    </div>
    <div className="w-[92px] h-full flex items-center justify-center">
      <div className="w-[45px] h-[45px] bg-[#1c70b8] flex items-center justify-center">
        <svg viewBox="0 0 44 44" className="w-[42px] h-[42px]" fill="none" stroke="#fff" strokeWidth="2"><rect x="3" y="8" width="9" height="5" /><rect x="3" y="36" width="9" height="5" /><rect x="19" y="22" width="9" height="5" /><rect x="30" y="30" width="10" height="4" /><path d="M7 13v23M7 25h12M24 27l6 5" /><circle cx="27" cy="10" r="7" /><path d="M32 15l7 7" strokeWidth="2.500" /></svg>
      </div>
    </div>
    <div className="w-[86px] ml-[2px] h-full relative flex flex-col">
      <div className={`h-[63px] mt-[1px] flex items-center justify-center border-b-2 border-[#333] ${cyan}`}>
        <IeLogo className="w-[44px] h-[46px]" />
      </div>
      <span className="mt-[2px] h-[4px] bg-white" />
    </div>
    <div className="w-[92px] ml-[3px] h-full flex items-center justify-center">
      <svg viewBox="0 0 44 44" className="w-[42px] h-[42px]">
        <circle cx="22" cy="22" r="21" fill="#17518f" />
        <path d="M10 4C2 10-1 22 4 32c5 9 17 13 27 9 8-3 12-11 12-19-2 8-8 14-15 14-7 0-13-5-14-11-1-5 2-9 6-10-4-1-4-5-4-9-3 1-5 2-6-2z" fill="#e8751f" />
        <path d="M6 16c-2 8 1 16 8 21-8-3-12-12-8-21z" fill="#f5b02f" />
        <path d="M36 6c5 4 7 10 7 16l-5-8z" fill="#f5d77a" />
      </svg>
    </div>
    <div className="w-[92px] h-full flex items-center justify-center">
      <svg viewBox="0 0 44 44" className="w-[42px] h-[42px]">
        <circle cx="22" cy="22" r="21" fill="#db4a3c" />
        <path d="M4 11L14 30 22 43A21 21 0 0 1 4 11z" fill="#2b9b4f" />
        <path d="M42 15H22l-4 0 6 28A21 21 0 0 0 42 15z" fill="#fbc531" />
        <circle cx="22" cy="22" r="10" fill="#fff" />
        <circle cx="22" cy="22" r="7.500" fill="#4a86ea" />
      </svg>
    </div>
    <div className="w-[92px] h-full flex items-center justify-center">
      <svg viewBox="0 0 44 44" className="w-[42px] h-[42px]">
        <ellipse cx="22" cy="22" rx="21" ry="21" fill="#d8121f" />
        <ellipse cx="22" cy="22" rx="10.500" ry="17" fill="#000" />
      </svg>
    </div>
    <div className="w-[92px] h-full flex items-center justify-center">
      <div className="w-[44px] h-[44px] rounded-[8px] bg-[#e8353b] flex items-center justify-center">
        <div className="w-[34px] h-[34px] rounded-full bg-white flex items-center justify-center">
          <svg viewBox="0 0 24 24" className="w-[24px] h-[24px]" fill="none" stroke="#d9292f" strokeWidth="5"><path d="M3 5l9 15 9-15" /></svg>
        </div>
      </div>
    </div>
    <div className="flex-1" />
    <TrayCell width="w-[44px]">
      <svg viewBox="0 0 32 28" className="w-[32px] h-[28px]" fill="none" stroke="#fff" strokeWidth="1.500"><rect x="1" y="2" width="8" height="8" /><path d="M9 2h22v17H5V10M16 19v7M9 26h14" /><rect x="3" y="4" width="4" height="3" fill="#fff" stroke="none" /></svg>
    </TrayCell>
    <TrayCell width="w-[46px]">
      <svg viewBox="0 0 32 28" className="w-[32px] h-[26px]" fill="none" stroke="#fff" strokeWidth="1.500"><path d="M1 9h4l7-7v24l-7-7H1zM16 9a7 7 0 0 1 0 10M20 6a11 11 0 0 1 0 16M25 2a16 16 0 0 1 0 24" /></svg>
    </TrayCell>
    <TrayCell width="w-[58px]">
      <svg viewBox="0 0 44 26" className="w-[44px] h-[26px]" fill="none" stroke="#fff" strokeWidth="1.500"><rect x="1" y="1" width="42" height="24" /><path d="M5 8h34M5 13h34" strokeDasharray="2 2" /><path d="M5 19h6M13 19h18M33 19h6" /></svg>
    </TrayCell>
    <TrayCell width="w-[121px]">
      <span className="text-[21px] leading-[33px] text-[#e4e4e4]">2:31 PM</span>
      <span className="text-[20px] leading-[33px] text-[#e4e4e4]">11/8/2017</span>
    </TrayCell>
    <TrayCell width="w-[74px]">
      <svg viewBox="0 0 32 30" className="w-[32px] h-[30px]" fill="none" stroke="#fff" strokeWidth="2"><path d="M1 1h30v23H21l-5 5-5-5H1z" /></svg>
    </TrayCell>
    <div className="w-[16px] shrink-0 border-l-2 border-white" />
    <div className="w-[48px] shrink-0 border-x-2 border-white flex items-center justify-center pt-[3px]">
      <DesktopIcon className="w-[30px] h-[23px]" />
    </div>
  </div>
);

export default function App() {
  return (
    <div className="w-[2808px] h-[1376px] bg-[#ececec] flex justify-center overflow-hidden">
      <div className="w-[2432px] h-full bg-black flex flex-col">
        <div className="flex-1 min-h-0 relative">
          <DesktopShortcuts />
          <Explorer />
          <Browser />
        </div>
        <Taskbar />
      </div>
    </div>
  );
}
